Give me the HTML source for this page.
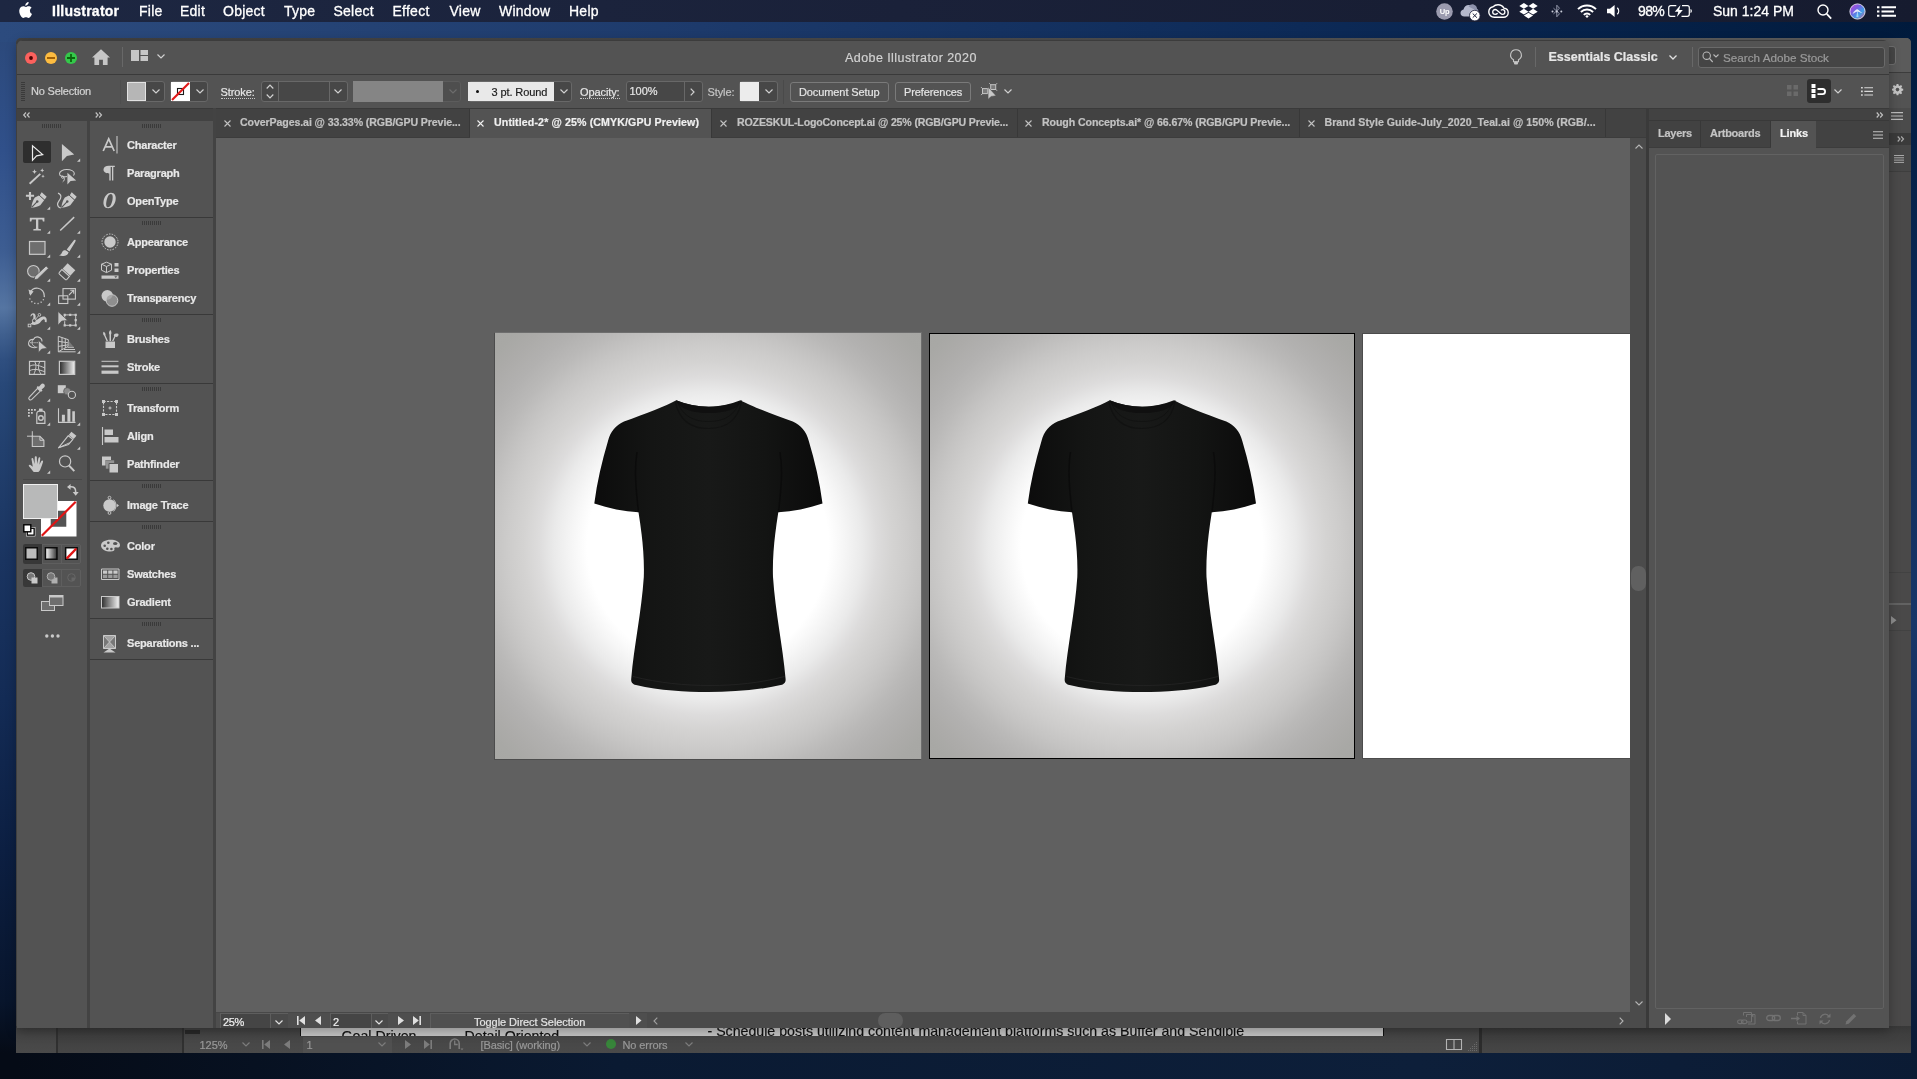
<!DOCTYPE html>
<html lang="en">
<head>
<meta charset="utf-8">
<title>Adobe Illustrator 2020</title>
<style>
*{box-sizing:border-box;margin:0;padding:0}
html,body{width:1917px;height:1079px;overflow:hidden;background:#06101f}
body{position:relative;font-family:"Liberation Sans",sans-serif;font-size:11px;color:#d6d6d6}
.a{position:absolute}
.t{position:absolute;white-space:nowrap;line-height:14px;-webkit-text-stroke:.2px}
svg{position:absolute;overflow:visible}
#desk{left:0;top:0;width:1917px;height:1079px;background:
 linear-gradient(90deg,rgba(0,0,0,0) 0px,rgba(0,0,0,0) 16px,#000 16px) ,
 linear-gradient(180deg,#2b4879 0px,#2b4879 22px,#30508a 150px,#3d5d92 250px,#5575a2 308px,#40608f 334px,#2f4f80 360px,#284878 385px,#22406e 450px,#1a3460 560px,#132b55 700px,#0c1f42 850px,#08152c 1000px,#050b16 1053px,#050b16 1079px);}
#desktop{left:0;top:22px;width:1917px;height:20px;background:linear-gradient(90deg,#2c4b7e 0,#1d3a6b 700px,#0d2a57 1300px,#001a3c 1917px)}
#deskright{left:1905px;top:22px;width:12px;height:1057px;background:linear-gradient(180deg,#001a3c 0,#0c2856 300px,#183668 600px,#12295a 800px,#0b1c3a 1000px,#0a1830 1057px)}
#deskbottom{left:16px;top:1050px;width:1901px;height:29px;background:linear-gradient(90deg,#050b16 0,#0a1a32 600px,#0d1f3a 1400px,#0b1b34 1917px)}
#menubar{will-change:transform;left:0;top:0;width:1917px;height:22px;background:linear-gradient(90deg,#1d2742 0,#1a2139 900px,#161b2f 1917px);color:#fff;font-size:14px}
#menubar .t{top:2px;line-height:18px;letter-spacing:.25px;-webkit-text-stroke:.3px #fff}
#back{will-change:transform;left:16px;top:38px;width:1895px;height:1015px;background:#4a4a4a;border-radius:5px 5px 0 0;overflow:hidden}
#win{will-change:transform;left:17px;top:39.600px;width:1872px;height:988.400px;background:#535353;border-radius:6px 6px 0 0;overflow:hidden;box-shadow:0 3px 12px rgba(0,0,0,.3)}
#wi,#bi{position:absolute;}
#wi{left:-17px;top:-39.600px}
#bi{left:-16px;top:-38px}
.dk{background:#424242}
.box{position:absolute;border:1px solid #686868;background:#474747;border-radius:3px}
.lbl{font-weight:bold;color:#e8e8e8;letter-spacing:-.2px}
.grip{position:absolute;width:19px;height:4px;background:repeating-linear-gradient(90deg,#3a3a3a 0,#3a3a3a 1px,rgba(0,0,0,0) 1px,rgba(0,0,0,0) 2px)}
</style>
</head>
<body>
<div id="desk" class="a"></div><div id="desktop" class="a"></div><div id="deskright" class="a"></div><div id="deskbottom" class="a"></div>
<div id="menubar" class="a">
<svg style="left:18px;top:2px" width="15" height="17" viewBox="0 0 15 17"><path fill="#fff" d="M10.6 0c.1 1-.3 1.900-.9 2.600-.6.700-1.500 1.200-2.400 1.100-.1-.9.300-1.900.900-2.500C8.800.5 9.800.05 10.600 0zM13.600 5.800c-.1.060-1.700 1-1.700 2.900 0 2.300 2 3.100 2.100 3.100-.01.050-.32 1.100-1.070 2.200-.65.950-1.330 1.900-2.400 1.900-1.050.02-1.400-.62-2.600-.62s-1.600.6-2.600.64c-1.030.04-1.800-1.030-2.500-1.970C1.500 12 .5 8.700 1.900 6.300c.7-1.200 1.950-1.950 3.300-1.970 1.030-.02 2 .7 2.600.7.630 0 1.800-.85 3.050-.73.520.02 1.980.21 2.750 1.500z"/></svg>
<span class="t" style="left:52px;font-weight:bold">Illustrator</span><span class="t" style="left:139px;">File</span><span class="t" style="left:180px;">Edit</span><span class="t" style="left:223px;">Object</span><span class="t" style="left:284px;">Type</span><span class="t" style="left:333.5px;">Select</span><span class="t" style="left:392.5px;">Effect</span><span class="t" style="left:449.5px;">View</span><span class="t" style="left:499px;">Window</span><span class="t" style="left:569px;">Help</span>
<span class="t" style="left:1638px;letter-spacing:-.6px">98%</span><span class="t" style="left:1713px;letter-spacing:0">Sun 1:24 PM</span>
<svg style="left:1435.500px;top:2.500px" width="17" height="17" viewBox="0 0 17 17"><circle cx="8.500" cy="8.500" r="8.300" fill="#9b9baf"/><text x="8.500" y="11" text-anchor="middle" font-family="Liberation Sans, sans-serif" font-weight="bold" font-size="7.500" letter-spacing="-.3" fill="#fff">Up</text></svg><svg style="left:1459.500px;top:3px" width="22" height="19" viewBox="0 0 22 19"><path d="M4.300 13.500C2 13.500.500 12 .500 10c0-1.700 1.200-3.200 3-3.500C4 4 6 2 8.800 2c2 0 3.700 1 4.600 2.600 2.300-.5 4.400 1.200 4.400 3.500 0 .3 0 .6-.1.900v4.500z" fill="#b4b8cc"/><path d="M8.500 3.500C10 1.500 12 1 13.600 1.500c2 .6 3.300 2.300 3.400 4.300 1 .5 1.500 1.500 1.300 2.700" fill="#8d92ab"/><circle cx="14.800" cy="12.600" r="5.300" fill="#fff" stroke="#1a2038" stroke-width=".8"/><path d="M12.700 10.500l4.200 4.200M16.900 10.500l-4.200 4.200" stroke="#1a2038" stroke-width="1"/></svg><svg style="left:1488px;top:4px" width="21" height="14" viewBox="0 0 21 14"><path d="M6.300 13.200C3.200 13.200.8 10.900.8 7.900c0-2.600 1.800-4.700 4.300-5.200C6.300 1.400 8.100.7 10 .7c2.600 0 4.800 1.400 5.900 3.400 2.500.3 4.300 2.300 4.300 4.600 0 2.500-2.100 4.500-4.700 4.500z" fill="none" stroke="#fff" stroke-width="1.400"/><path d="M7.200 10.300C5.800 10.300 4.700 9.200 4.700 7.900s1.100-2.400 2.500-2.400c.7 0 1.300.3 1.800.7l3.700 3.300c.5.500 1.100.8 1.900.8 1.300 0 2.300-1 2.300-2.300s-1-2.300-2.300-2.300c-.7 0-1.300.3-1.700.7M9.700 9.300c-.6.600-1.500 1-2.500 1" fill="none" stroke="#fff" stroke-width="1.300"/></svg><svg style="left:1519px;top:3px" width="19" height="16" viewBox="0 0 19 16"><path d="M4.900 0L.3 2.900l4.600 2.900 4.600-2.900zM14.100 0L9.500 2.900l4.600 2.900 4.600-2.900zM.3 8.700l4.600 2.900 4.600-2.900-4.600-2.900zM14.100 5.800L9.500 8.700l4.600 2.900 4.600-2.900zM4.900 12.600l4.600 2.900 4.600-2.900-4.600-2.900z" fill="#fff"/></svg><svg style="left:1551px;top:4px" width="12" height="15" viewBox="0 0 12 15"><path d="M2.500 4.200l6 5.500L5.800 12.800V1.200l2.700 3.100-6 5.500" fill="none" stroke="#9ea3b6" stroke-width=".9"/><circle cx="1.500" cy="7.500" r="1" fill="#c8ccd8"/><circle cx="5.800" cy="7.500" r="1" fill="#c8ccd8"/><circle cx="10.300" cy="7.500" r="1" fill="#c8ccd8"/></svg><svg style="left:1576.500px;top:3.500px" width="20" height="14" viewBox="0 0 20 14"><path d="M1 5.200a12.700 12.700 0 0 1 18 0M3.900 8a8.600 8.600 0 0 1 12.200 0M6.800 10.800a4.500 4.500 0 0 1 6.400 0" fill="none" stroke="#fff" stroke-width="1.900"/><path d="M8.300 12.200a2.400 2.400 0 0 1 3.400 0L10 14z" fill="#fff"/></svg><svg style="left:1606.500px;top:5px" width="15" height="12" viewBox="0 0 15 12"><path d="M0 3.800h3L7.600 0v12L3 8.200H0z" fill="#fff"/><path d="M10.300 2.700a4.700 4.700 0 0 1 0 6.600" fill="none" stroke="#fff" stroke-width="1.300"/></svg><svg style="left:1668px;top:5px" width="24" height="12" viewBox="0 0 24 12"><path d="M8.300.700H2.700a2 2 0 0 0-2 2v6.600a2 2 0 0 0 2 2h4.600M14 .700h5.300a2 2 0 0 1 2 2v6.600a2 2 0 0 1-2 2h-5.800" fill="none" stroke="#fff" stroke-width="1.200"/><path d="M22.500 4v4c.9-.3 1.300-1 1.300-2s-.4-1.700-1.300-2z" fill="#fff"/><path d="M12.500 0L6.800 6.800h3.500L8.800 12l6-7h-3.600z" fill="#fff"/></svg><svg style="left:1816.500px;top:3.500px" width="15" height="16" viewBox="0 0 15 16"><circle cx="6" cy="6" r="5" fill="none" stroke="#fff" stroke-width="1.400"/><path d="M9.700 9.800l4.500 4.800" stroke="#fff" stroke-width="1.700"/></svg><svg style="left:1848.500px;top:2.500px" width="17" height="17" viewBox="0 0 17 17"><defs><linearGradient id="siri" x1="0" y1="0" x2="1" y2="1"><stop offset="0" stop-color="#c84fd8"/><stop offset=".35" stop-color="#7c5ce0"/><stop offset=".65" stop-color="#3fa0e8"/><stop offset="1" stop-color="#e0508a"/></linearGradient></defs><circle cx="8.500" cy="8.500" r="7.600" fill="url(#siri)" stroke="#e8e8f4" stroke-width=".9"/><path d="M3.500 11c2-3.500 4-5 5.200-4.600 1.200.4 2.600 2.400 4.600 3.200-2.200.4-3.700-1-4.800-1-1.200 0-2.600 1.300-5 2.400z" fill="#fff" opacity=".85"/><path d="M8.500 6.200l1 8-2.200-.2z" fill="#dff" opacity=".6"/></svg><svg style="left:1876.500px;top:5.500px" width="19" height="11" viewBox="0 0 19 11"><path d="M0 1.200h2.400M0 5.500h2.400M0 9.800h2.400" stroke="#fff" stroke-width="1.900"/><path d="M4.500 1.200H19M4.500 5.500H17M4.500 9.800H19" stroke="#fff" stroke-width="1.900"/></svg></div>
<div id="back" class="a"><div id="bi">
<div class="a" style="left:16px;top:38px;width:1895px;height:6px;background:linear-gradient(90deg,#414141 0,#4a4a4b 900px,#5c5c5c 1700px)"></div><div class="a" style="left:1885px;top:38px;width:26px;height:34px;background:#5b5b5b"></div><div class="a" style="left:1880px;top:45.500px;width:15.500px;height:19.500px;background:#474747;border:1px solid #707070;border-radius:3px"></div><div class="a" style="left:1885px;top:72px;width:26px;height:1px;background:#3c3c3c"></div><div class="a" style="left:1885px;top:73px;width:26px;height:34.500px;background:#535353"></div><svg style="left:1891.500px;top:83.500px" width="11" height="11" viewBox="0 0 11 11"><path d="M4.600 0h1.800l.3 1.500 1 .4L9 1l1.200 1.300-.9 1.200.4 1 1.500.3v1.800l-1.500.3-.4 1 .9 1.200L9 10.300l-1.300-.9-1 .4-.3 1.500H4.600l-.3-1.500-1-.4-1.300.9L.8 9l.9-1.200-.4-1L0 6.500V4.700l1.300-.3.400-1L.8 2.200 2 1l1.300.9 1-.4z" fill="#c4c4c4"/><circle cx="5.500" cy="5.600" r="1.800" fill="#535353"/></svg><div class="a" style="left:1885px;top:107.500px;width:26px;height:25px;background:#4b4b4b"></div><svg style="left:1891px;top:111.500px" width="12" height="8" viewBox="0 0 12 8"><path d="M0 .600h12M0 4h12M0 7.400h12" stroke="#bdbdbd" stroke-width="1.100"/></svg><div class="a" style="left:1885px;top:132.500px;width:26px;height:12px;background:#3b3b3b"></div><svg style="left:1896.5px;top:135.5px" width="7" height="6" viewBox="0 0 7 6"><path d="M.700 .500L3 3 .700 5.500M4.200 .500L6.500 3 4.200 5.500" fill="none" stroke="#a8a8a8" stroke-width="1.200"/></svg><div class="a" style="left:1885px;top:144.500px;width:26px;height:27px;background:#474747;border-bottom:1px solid #3e3e3e"></div><svg style="left:1894px;top:154.500px" width="10" height="8" viewBox="0 0 10 8"><path d="M0 .500h10M0 2.800h10M0 5.100h10M0 7.400h10" stroke="#b4b4b4" stroke-width=".9"/></svg><div class="a" style="left:1885px;top:172px;width:26px;height:881px;background:#4a4949"></div><div class="a" style="left:1889px;top:572px;width:22px;height:1px;background:#424242"></div><div class="a" style="left:1889px;top:603px;width:22px;height:1.500px;background:#626262"></div><div class="a" style="left:1889px;top:630px;width:22px;height:1px;background:#424242"></div><svg style="left:1891px;top:615.500px" width="6" height="9" viewBox="0 0 6 9"><path d="M0 0v8.500l5.500-4.200z" fill="#8e8e8e"/></svg><div class="a" style="left:16px;top:1026px;width:1895px;height:27px;background:linear-gradient(180deg,#383838 0,#3e3e3e 8px,#464646 27px)"></div><div class="a" style="left:16px;top:1026px;width:40px;height:27px;background:linear-gradient(180deg,#3e3e3e 0,#454545 10px,#4a4a4a 27px)"></div><div class="a" style="left:55.500px;top:1026px;width:2px;height:27px;background:#303030"></div><div class="a" style="left:182px;top:1026px;width:2px;height:27px;background:#303030"></div><div class="a" style="left:184px;top:1026px;width:1295px;height:27px;background:linear-gradient(180deg,#404040 0,#464646 10px,#4a4a4a 27px)"></div><div class="a" style="left:184.500px;top:1029.500px;width:15px;height:4px;background:#282828"></div><div class="a" style="left:1479px;top:1026px;width:3px;height:27px;background:#2c2c2c"></div><div class="a" style="left:300px;top:1028px;width:1083.500px;height:8.300px;background:#c6c6c6;border-left:1px solid #111;border-right:1px solid #111;overflow:hidden;font-size:14.200px;color:#111"><span class="t" style="left:40.500px;top:.300px;line-height:16px">Goal Driven</span><span class="t" style="left:163.500px;top:.300px;line-height:16px">Detail Oriented</span><span class="t" style="left:406.500px;top:-4.600px;line-height:16px;font-size:14.200px;letter-spacing:-.012px">- Schedule posts utilizing content management platforms such as Buffer and Sendible</span></div><span class="t" style="left:199.500px;top:1037.500px;color:#989898">125%</span><svg style="left:241.5px;top:1042px" width="8" height="5" viewBox="0 0 8 5"><path d="M.5.500L4 4l3.500-3.500" fill="none" stroke="#7c7c7c" stroke-width="1.200"/></svg><svg style="left:261.5px;top:1039.5px" width="8" height="9" viewBox="0 0 8 9"><path d="M0 0h1.600v9H0zM8 0v9L2.200 4.500z" fill="#7c7c7c"/></svg><svg style="left:283.5px;top:1039.5px" width="8" height="9" viewBox="0 0 8 9"><path d="M6 0v9L0 4.500z" fill="#7c7c7c"/></svg><div class="a" style="left:302.500px;top:1036.500px;width:89px;height:16px;background:#505050"></div><span class="t" style="left:306.500px;top:1037.500px;color:#989898">1</span><svg style="left:378px;top:1042px" width="8" height="5" viewBox="0 0 8 5"><path d="M.5.500L4 4l3.500-3.500" fill="none" stroke="#7c7c7c" stroke-width="1.200"/></svg><svg style="left:405px;top:1039.5px" width="8" height="9" viewBox="0 0 8 9"><path d="M0 0v9l6-4.500z" fill="#7c7c7c"/></svg><svg style="left:424px;top:1039.5px" width="8" height="9" viewBox="0 0 8 9"><path d="M6.400 0H8v9H6.400zM0 0v9l5.800-4.500z" fill="#7c7c7c"/></svg><svg style="left:449px;top:1038px" width="15" height="13" viewBox="0 0 15 13"><path d="M1.200 11V5.500A4.500 4.500 0 0 1 10.200 5.500V11" fill="none" stroke="#7c7c7c" stroke-width="1.600"/><path d="M5.700 2.500v4h3" fill="none" stroke="#7c7c7c" stroke-width="1.300"/><path d="M11.500 10.500h3l-1.500 1.800z" fill="#7c7c7c"/></svg><span class="t" style="left:480.500px;top:1037.500px;color:#989898;letter-spacing:-.1px">[Basic] (working)</span><svg style="left:583px;top:1042px" width="8" height="5" viewBox="0 0 8 5"><path d="M.5.500L4 4l3.500-3.500" fill="none" stroke="#7c7c7c" stroke-width="1.200"/></svg><div class="a" style="left:606px;top:1039px;width:10px;height:10px;border-radius:50%;background:#37853a"></div><span class="t" style="left:622.500px;top:1037.500px;color:#989898;letter-spacing:-.1px">No errors</span><svg style="left:685px;top:1042px" width="8" height="5" viewBox="0 0 8 5"><path d="M.5.500L4 4l3.500-3.500" fill="none" stroke="#7c7c7c" stroke-width="1.200"/></svg><svg style="left:1446px;top:1039px" width="16" height="11" viewBox="0 0 16 11"><path d="M.5.500h15v10H.5zM8 .500v10" fill="none" stroke="#b4b4b4" stroke-width="1.100"/></svg><svg style="left:1468px;top:1041px" width="10" height="10" viewBox="0 0 10 10"><path d="M8.500 1v1M6.500 3v1M8.500 3v1M4.500 5v1M6.500 5v1M8.500 5v1M2.500 7v1M4.500 7v1M6.500 7v1M8.500 7v1M.5 9v1M2.500 9v1M4.500 9v1M6.500 9v1M8.500 9v1" stroke="#6a6a6a" stroke-width="1"/></svg></div></div>
<div id="win" class="a"><div id="wi">
<div class="a" style="left:17px;top:39.600px;width:1872px;height:1px;background:#3c3c3c"></div><div class="a" style="left:17px;top:74px;width:1872px;height:1px;background:#3a3a3a"></div><svg style="left:24px;top:51px" width="56" height="14" viewBox="0 0 56 14"><circle cx="7" cy="7" r="6" fill="#fc615d"/><circle cx="7" cy="7" r="1.9" fill="#4d0000"/><circle cx="27" cy="7" r="6" fill="#fdbc40"/><rect x="23" y="6.1" width="8" height="1.8" fill="#985700"/><circle cx="47" cy="7" r="6" fill="#34c84a"/><path d="M43 7h8M47 3v8" stroke="#0b650d" stroke-width="1.8"/></svg><svg style="left:92px;top:49px" width="18" height="16" viewBox="0 0 18 16"><path fill="#c6c6c6" d="M9 .3L0 8.600h2.400V16h4.700v-5.300h3.800V16h4.700V8.600H18z"/></svg><div class="a" style="left:122px;top:47px;width:1px;height:20px;background:#686868"></div><svg style="left:131px;top:50px" width="17" height="11" viewBox="0 0 17 11"><path fill="#c6c6c6" d="M0 0h8v11H0zM9.500 0H17v5H9.500zM9.500 6H17v5H9.500z"/></svg><svg style="left:157px;top:54px" width="8" height="5" viewBox="0 0 8 5"><path d="M.5.500L4 4l3.500-3.500" fill="none" stroke="#d0d0d0" stroke-width="1.200"/></svg><span class="t" style="left:845px;top:51px;font-size:12.5px;letter-spacing:.43px;color:#d2d2d2">Adobe Illustrator 2020</span><svg style="left:1510px;top:49px" width="12" height="16" viewBox="0 0 12 16"><path d="M6 .7a5.300 5.300 0 0 0-2.500 10v2h5v-2A5.300 5.300 0 0 0 6 .7z" fill="none" stroke="#c6c6c6" stroke-width="1.100"/><rect x="4" y="12.500" width="4" height="3" rx="1" fill="#c6c6c6"/></svg><div class="a" style="left:1535px;top:47px;width:1px;height:20px;background:#686868"></div><span class="t" style="left:1548.500px;top:50px;font-size:12.5px;font-weight:bold;color:#e6e6e6">Essentials Classic</span><svg style="left:1669px;top:55px" width="8" height="5" viewBox="0 0 8 5"><path d="M.5.500L4 4l3.500-3.500" fill="none" stroke="#e0e0e0" stroke-width="1.300"/></svg><div class="a" style="left:1692px;top:47px;width:1px;height:20px;background:#686868"></div><div class="box" style="left:1698px;top:47px;width:187px;height:21px;background:#454545;border-color:#6a6a6a"></div><svg style="left:1702px;top:51px" width="18" height="13" viewBox="0 0 18 13"><circle cx="4.700" cy="4.700" r="3.700" fill="none" stroke="#b8b8b8" stroke-width="1.100"/><path d="M7.400 7.400l3.300 3.600" stroke="#b8b8b8" stroke-width="1.200"/><path d="M11.500 3.500l2.500 2.500 2.500-2.500" fill="none" stroke="#b8b8b8" stroke-width="1.100"/></svg><span class="t" style="left:1723px;top:51px;font-size:11.7px;color:#9a9a9a">Search Adobe Stock</span><div class="a" style="left:20.500px;top:82px;width:4px;height:19px;background:repeating-linear-gradient(180deg,#3a3a3a 0,#3a3a3a 1px,rgba(0,0,0,0) 1px,rgba(0,0,0,0) 2px)"></div><span class="t" style="left:31px;top:84px;letter-spacing:-.2px;color:#d4d4d4">No Selection</span><div class="a" style="left:120px;top:80px;width:1px;height:24px;background:#4e4e4e"></div><div class="box" style="left:127px;top:81px;width:38px;height:21px"></div><div class="a" style="left:127px;top:82px;width:19px;height:19px;background:#b6b6b6;border:1px solid #e2e2e2"></div><svg style="left:152px;top:89px" width="8" height="5" viewBox="0 0 8 5"><path d="M.5.500L4 4l3.500-3.500" fill="none" stroke="#d0d0d0" stroke-width="1.200"/></svg><div class="box" style="left:170px;top:81px;width:38px;height:21px"></div><svg style="left:171px;top:82px" width="19" height="19" viewBox="0 0 19 19"><rect width="19" height="19" fill="#fff"/><rect x="6.500" y="6.500" width="6" height="6" fill="none" stroke="#1a1a1a" stroke-width="1.100"/><path d="M1 18L18 1" stroke="#e01818" stroke-width="2.100"/></svg><svg style="left:195.5px;top:89px" width="8" height="5" viewBox="0 0 8 5"><path d="M.5.500L4 4l3.500-3.500" fill="none" stroke="#d0d0d0" stroke-width="1.200"/></svg><span class="t" style="left:220.500px;top:86px;letter-spacing:-.1px;color:#e6e6e6;border-bottom:1px dotted #c8c8c8;line-height:12px;padding-bottom:0">Stroke:</span><div class="box" style="left:260.500px;top:81px;width:87px;height:21px"></div><div class="a" style="left:278px;top:82px;width:1px;height:19px;background:#686868"></div><div class="a" style="left:329px;top:82px;width:1px;height:19px;background:#686868"></div><svg style="left:265.500px;top:84px" width="8" height="15" viewBox="0 0 8 15"><path d="M.7 4.500L4 1.200l3.300 3.300M.7 10.500L4 13.800l3.300-3.300" fill="none" stroke="#d0d0d0" stroke-width="1.200"/></svg><svg style="left:334px;top:89px" width="8" height="5" viewBox="0 0 8 5"><path d="M.5.500L4 4l3.500-3.500" fill="none" stroke="#d0d0d0" stroke-width="1.200"/></svg><div class="box" style="left:353px;top:81px;width:108px;height:21px;border-color:#5c5c5c;background:#4e4e4e"></div><div class="a" style="left:353px;top:81px;width:90px;height:21px;background:#858585"></div><svg style="left:448.5px;top:89px" width="8" height="5" viewBox="0 0 8 5"><path d="M.5.500L4 4l3.500-3.500" fill="none" stroke="#6c6c6c" stroke-width="1.200"/></svg><div class="box" style="left:467.500px;top:81px;width:104.500px;height:21px"></div><div class="a" style="left:467.500px;top:82px;width:86.500px;height:19px;background:#e9e9e9"></div><div class="a" style="left:475.500px;top:90px;width:3px;height:3px;border-radius:50%;background:#111"></div><span class="t" style="left:491.500px;top:84.500px;color:#1c1c1c;letter-spacing:-.1px">3 pt. Round</span><svg style="left:559.5px;top:89px" width="8" height="5" viewBox="0 0 8 5"><path d="M.5.500L4 4l3.500-3.500" fill="none" stroke="#d0d0d0" stroke-width="1.200"/></svg><span class="t" style="left:580px;top:86px;letter-spacing:-.1px;color:#e6e6e6;border-bottom:1px dotted #c8c8c8;line-height:12px;padding-bottom:0">Opacity:</span><div class="box" style="left:625.500px;top:81px;width:77px;height:21px"></div><div class="a" style="left:683.500px;top:82px;width:1px;height:19px;background:#686868"></div><span class="t" style="left:629.500px;top:84px;color:#e6e6e6">100%</span><svg style="left:690px;top:87.500px" width="5" height="8" viewBox="0 0 5 8"><path d="M.7.700L4 4 .7 7.300" fill="none" stroke="#d0d0d0" stroke-width="1.200"/></svg><span class="t" style="left:707.500px;top:84.500px;letter-spacing:-.1px;color:#c4c4c4">Style:</span><div class="box" style="left:739px;top:81px;width:38.500px;height:21px"></div><div class="a" style="left:739.500px;top:82px;width:19.500px;height:19px;background:#ececec"></div><svg style="left:764.5px;top:89px" width="8" height="5" viewBox="0 0 8 5"><path d="M.5.500L4 4l3.500-3.500" fill="none" stroke="#d0d0d0" stroke-width="1.200"/></svg><div class="a" style="left:783px;top:80px;width:1px;height:24px;background:#4a4a4a"></div><div class="box" style="left:790px;top:81.500px;width:99px;height:20px;background:#535353;border-color:#7a7a7a"></div><span class="t" style="left:799px;top:84.500px;color:#e4e4e4;letter-spacing:-.1px">Document Setup</span><div class="box" style="left:895px;top:81.500px;width:75.500px;height:20px;background:#535353;border-color:#7a7a7a"></div><span class="t" style="left:904px;top:84.500px;color:#e4e4e4;letter-spacing:-.1px">Preferences</span><svg style="left:980px;top:82px" width="18" height="18" viewBox="0 0 18 18"><path d="M1 5.100l1.500 1.500M1 13.100l1.500-1.500M9.200 1.200l1.500 1.500M17.100 1.200l-1.500 1.500M17.100 8.800l-1.500-1.500" stroke="#c4c4c4" stroke-width=".9"/><rect x="2.500" y="6.600" width="5" height="5" fill="#7a7a7a" stroke="#c4c4c4" stroke-width="1"/><rect x="10.700" y="2.700" width="5" height="4.800" fill="#7a7a7a" stroke="#c4c4c4" stroke-width="1"/><path d="M8.100 5v12.300l2.900-2.900 5-.7z" fill="#c8c8c8" stroke="#535353" stroke-width=".5"/></svg><svg style="left:1003.5px;top:88.8px" width="8" height="5" viewBox="0 0 8 5"><path d="M.5.500L4 4l3.500-3.500" fill="none" stroke="#d0d0d0" stroke-width="1.200"/></svg><svg style="left:1787px;top:85px" width="11" height="11" viewBox="0 0 11 11"><path fill="#6a6a6a" d="M0 0h4.500v4.500H0zM6.500 0H11v4.500H6.500zM0 6.500h4.500V11H0zM6.500 6.500H11V11H6.500z"/></svg><div class="a" style="left:1807px;top:79px;width:24px;height:24px;border-radius:3px;background:#2e2e2e"></div><svg style="left:1811px;top:83.500px" width="16" height="15" viewBox="0 0 16 15"><path fill="#fff" d="M.5 0h4v4h-4zM.5 5h4v4h-4zM.5 10h4v4h-4z"/><path d="M6.500 5h5a2.600 2.600 0 0 1 0 5.200h-5" fill="none" stroke="#fff" stroke-width="1.800"/></svg><svg style="left:1833.5px;top:88.5px" width="8" height="5" viewBox="0 0 8 5"><path d="M.5.500L4 4l3.500-3.500" fill="none" stroke="#d0d0d0" stroke-width="1.200"/></svg><svg style="left:1860.500px;top:87px" width="12" height="9" viewBox="0 0 12 9"><path d="M0 .800h1.800M0 4.400h1.800M0 8h1.800" stroke="#d8d8d8" stroke-width="1.600"/><path d="M3.300 .800H12M3.300 4.400H12M3.300 8H12" stroke="#d8d8d8" stroke-width="1.100"/></svg><div class="a dk" style="left:17px;top:108px;width:1872px;height:13px"></div><div class="a" style="left:17px;top:108px;width:1872px;height:1px;background:#3a3a3a"></div><div class="a" style="left:87px;top:121px;width:3px;height:907px;background:#434343"></div><div class="a" style="left:213px;top:108px;width:3px;height:920px;background:#434343"></div><div class="a" style="left:1646px;top:108px;width:3px;height:920px;background:#3a3a3a"></div><svg style="left:22.5px;top:112px" width="7" height="6" viewBox="0 0 7 6"><path d="M3 .500L.700 3 3 5.500M6.500 .500L4.200 3 6.500 5.500" fill="none" stroke="#c0c0c0" stroke-width="1.200"/></svg><svg style="left:94.5px;top:112px" width="7" height="6" viewBox="0 0 7 6"><path d="M.700 .500L3 3 .700 5.500M4.200 .500L6.500 3 4.200 5.500" fill="none" stroke="#c0c0c0" stroke-width="1.200"/></svg><svg style="left:1875.5px;top:112px" width="7" height="6" viewBox="0 0 7 6"><path d="M.700 .500L3 3 .700 5.500M4.200 .500L6.500 3 4.200 5.500" fill="none" stroke="#c0c0c0" stroke-width="1.200"/></svg><div class="a dk" style="left:216px;top:109px;width:1430px;height:28.500px"></div><div class="a" style="left:216px;top:137px;width:1430px;height:1px;background:#3c3c3c"></div><div class="a" style="left:216px;top:109px;width:253.5px;height:28px;background:#424242;border-right:1px solid #383838"></div><svg style="left:223.5px;top:119.500px" width="7" height="7" viewBox="0 0 7 7"><path d="M.500 .500l6 6M6.500 .500l-6 6" stroke="#c2c2c2" stroke-width="1.100"/></svg><span class="t" style="left:240px;top:115px;font-weight:bold;font-size:10.6px;letter-spacing:-0.1px;color:#c2c2c2">CoverPages.ai @ 33.33% (RGB/GPU Previe...</span><div class="a" style="left:469.5px;top:109px;width:242.0px;height:29px;background:#535353;border-right:1px solid #383838"></div><svg style="left:477px;top:119.500px" width="7" height="7" viewBox="0 0 7 7"><path d="M.500 .500l6 6M6.500 .500l-6 6" stroke="#f0f0f0" stroke-width="1.100"/></svg><span class="t" style="left:494px;top:115px;font-weight:bold;font-size:10.6px;letter-spacing:0.13px;color:#f0f0f0">Untitled-2* @ 25% (CMYK/GPU Preview)</span><div class="a" style="left:711.5px;top:109px;width:306.0px;height:28px;background:#424242;border-right:1px solid #383838"></div><svg style="left:720px;top:119.500px" width="7" height="7" viewBox="0 0 7 7"><path d="M.500 .500l6 6M6.500 .500l-6 6" stroke="#c2c2c2" stroke-width="1.100"/></svg><span class="t" style="left:737px;top:115px;font-weight:bold;font-size:10.6px;letter-spacing:-0.16px;color:#c2c2c2">ROZESKUL-LogoConcept.ai @ 25% (RGB/GPU Previe...</span><div class="a" style="left:1017.5px;top:109px;width:282.5px;height:28px;background:#424242;border-right:1px solid #383838"></div><svg style="left:1025px;top:119.500px" width="7" height="7" viewBox="0 0 7 7"><path d="M.500 .500l6 6M6.500 .500l-6 6" stroke="#c2c2c2" stroke-width="1.100"/></svg><span class="t" style="left:1042px;top:115px;font-weight:bold;font-size:10.6px;letter-spacing:-0.09px;color:#c2c2c2">Rough Concepts.ai* @ 66.67% (RGB/GPU Previe...</span><div class="a" style="left:1300px;top:109px;width:305.5px;height:28px;background:#424242;border-right:1px solid #383838"></div><svg style="left:1308px;top:119.500px" width="7" height="7" viewBox="0 0 7 7"><path d="M.500 .500l6 6M6.500 .500l-6 6" stroke="#c2c2c2" stroke-width="1.100"/></svg><span class="t" style="left:1324.5px;top:115px;font-weight:bold;font-size:10.6px;letter-spacing:0.04px;color:#c2c2c2">Brand Style Guide-July_2020_Teal.ai @ 150% (RGB/...</span><div class="grip" style="left:42px;top:124px"></div><div class="a" style="left:23px;top:141px;width:28px;height:22px;border-radius:2px;background:#2e2e2e"></div><svg style="left:0;top:0" width="0" height="0"><defs><linearGradient id="tg" x1="0" x2="1" y1="0" y2="0"><stop offset="0" stop-color="#2a2a2a"/><stop offset="1" stop-color="#f2f2f2"/></linearGradient></defs></svg>
<svg style="left:25px;top:140px" width="24" height="24" viewBox="0 0 24 24"><path d="M7.500 5.700V20.300l4.100-4.400 6.100-1.300z" fill="none" stroke="#ececec" stroke-width="1.200" stroke-linejoin="miter"/></svg>
<svg style="left:55px;top:140px" width="24" height="24" viewBox="0 0 24 24"><path d="M6.900 4v17.200l5-5.300 7.300-1.400z" fill="#c9c9c9"/><path d="M25.200 18.600v3.200H22z" fill="#c9c9c9"/></svg>
<svg style="left:25px;top:164px" width="24" height="24" viewBox="0 0 24 24"><path d="M4.600 19.800L15.300 9.900" stroke="#c9c9c9" stroke-width="1.900"/><path d="M9.500 5.300l.7 1.700 1.700.7-1.700.7-.7 1.700-.7-1.700-1.700-.7 1.700-.7zM17.200 4.300l.6 1.500 1.500.6-1.500.6-.6 1.500-.6-1.500-1.500-.6 1.500-.6zM18 10.600l.5 1.200 1.200.5-1.200.5-.5 1.200-.5-1.200-1.200-.5 1.200-.5z" fill="#c9c9c9"/></svg>
<svg style="left:55px;top:164px" width="24" height="24" viewBox="0 0 24 24"><path d="M12 12.500c-4 .8-7.500-.3-7.500-2.800 0-2.400 3.300-4.200 7.400-4.200 4 0 7.400 1.700 7.400 4 0 .8-.3 1.500-.9 2" fill="none" stroke="#c9c9c9" stroke-width="1.100"/><path d="M6.500 12.300c1.500-.8 3 .2 2.300 1.500-.6 1-2.300.6-2.200-.6.100-1 1.800-.6 2.500.4.800 1.200.2 3.300-1.400 4.200" fill="none" stroke="#c9c9c9" stroke-width="1"/><path d="M12.400 8.800v11.800l3.200-3.500 5.600-.6z" fill="#c9c9c9"/></svg>
<svg style="left:25px;top:188px" width="24" height="24" viewBox="0 0 24 24"><path d="M.900 7.800h8.200M5 4v7.900" stroke="#c9c9c9" stroke-width="2.100"/><path d="M6.400 19.700C6.800 15.500 8 12 9.900 9.600L14.400 7.200 19.500 11.800 15.300 17.300C12.500 18.800 9.500 19.600 6.400 19.700z" fill="#c9c9c9"/><path d="M6.900 19.200L11.900 13.900" stroke="#535353" stroke-width="1.100"/><circle cx="12.300" cy="13.500" r="1.200" fill="#535353"/><path d="M14.600 7.400L16.700 4.300 21.700 8.800 19.300 11.900z" fill="#c9c9c9"/><path d="M13.900 6.900L20 12.400" stroke="#535353" stroke-width="1"/><path d="M25.200 18.600v3.200H22z" fill="#c9c9c9"/></svg>
<svg style="left:55px;top:188px" width="24" height="24" viewBox="0 0 24 24"><path d="M3 5.100c2.600 1 3.400 2.600 2.600 5-.8 2.400-3.400 4-3 6.600.2 1.600 1.400 2.800 3.200 3.300" fill="none" stroke="#c9c9c9" stroke-width="1.200"/><path d="M6.400 19.700C6.800 15.500 8 12 9.900 9.600L14.400 7.200 19.500 11.800 15.300 17.300C12.500 18.800 9.500 19.600 6.400 19.700z" fill="#c9c9c9"/><path d="M6.900 19.200L11.900 13.900" stroke="#535353" stroke-width="1.100"/><circle cx="12.300" cy="13.500" r="1.200" fill="#535353"/><path d="M14.600 7.400L16.700 4.300 21.700 8.800 19.300 11.900z" fill="#c9c9c9"/><path d="M13.900 6.900L20 12.400" stroke="#535353" stroke-width="1"/></svg>
<svg style="left:25px;top:212px" width="24" height="24" viewBox="0 0 24 24"><path d="M4.800 5.700h14.600v3.800h-1.500l-.6-1.900H13.300v9.200l2.700.5v1.300H8.300v-1.300l2.700-.5V7.600H6.900l-.6 1.900H4.800z" fill="#c9c9c9"/><path d="M25.200 18.600v3.200H22z" fill="#c9c9c9"/></svg>
<svg style="left:55px;top:212px" width="24" height="24" viewBox="0 0 24 24"><path d="M5.200 18.500L19.200 5.100" stroke="#c9c9c9" stroke-width="1.500"/><path d="M25.200 18.600v3.200H22z" fill="#c9c9c9"/></svg>
<svg style="left:25px;top:236px" width="24" height="24" viewBox="0 0 24 24"><rect x="4.500" y="5.500" width="15.500" height="12.800" fill="#6e6e6e" stroke="#c9c9c9" stroke-width="1.200"/><path d="M25.200 18.600v3.200H22z" fill="#c9c9c9"/></svg>
<svg style="left:55px;top:236px" width="24" height="24" viewBox="0 0 24 24"><path d="M19.800 3.800c1.200-.3 1 .9.400 2.100l-5.800 9.500-2.700-1.800 7-9.100c.3-.4.700-.6 1.100-.7z" fill="#c9c9c9"/><path d="M10.900 14.500l2.700 1.800c-.5 2.500-2.800 3.700-5.200 3.700-1.700 0-3.300-.3-4.400-.7 2.200-.6 2.500-1.900 3.200-3.400.7-1.400 2.200-2 3.700-1.400z" fill="#c9c9c9"/><path d="M25.200 18.600v3.200H22z" fill="#c9c9c9"/></svg>
<svg style="left:25px;top:260px" width="24" height="24" viewBox="0 0 24 24"><circle cx="8.400" cy="11.300" r="5.800" fill="#6e6e6e" stroke="#c9c9c9" stroke-width="1.100"/><path d="M9.200 19.900l.7-3.500L21.200 5.900l2.300 2.400L12.600 19z" fill="#c9c9c9" stroke="#535353" stroke-width=".8"/><path d="M25.200 18.600v3.200H22z" fill="#c9c9c9"/></svg>
<svg style="left:55px;top:260px" width="24" height="24" viewBox="0 0 24 24"><path d="M12.600 3.200l7.700 7-5 5.500-7.700-7z" fill="#c9c9c9"/><path d="M6.900 9.500l7.600 6.900-2.600 2.900c-.5.500-1.200.6-1.700.1l-5.800-5.300c-.5-.5-.5-1.200 0-1.700z" fill="none" stroke="#c9c9c9" stroke-width="1.100"/><path d="M25.200 18.600v3.200H22z" fill="#c9c9c9"/></svg>
<svg style="left:25px;top:284px" width="24" height="24" viewBox="0 0 24 24"><path d="M4.600 9.600A7.500 7.500 0 0 1 19.300 12" fill="none" stroke="#c9c9c9" stroke-width="1.200"/><path d="M3.400 5.500l5.200 2-3.400 4.200z" fill="#c9c9c9"/><path d="M19.300 12a7.500 7.500 0 0 1-14.900 1.300" fill="none" stroke="#c9c9c9" stroke-width="1.300" stroke-dasharray="1.200 2.100"/><path d="M25.200 18.600v3.200H22z" fill="#c9c9c9"/></svg>
<svg style="left:55px;top:284px" width="24" height="24" viewBox="0 0 24 24"><rect x="3.600" y="11.800" width="9.200" height="7.700" fill="none" stroke="#c9c9c9" stroke-width="1.100"/><rect x="8" y="4.600" width="12.400" height="10.500" fill="none" stroke="#c9c9c9" stroke-width="1.100"/><path d="M14 11l4.300-4.300M15.300 6.300h3.400v3.400" fill="none" stroke="#c9c9c9" stroke-width="1.100"/><path d="M25.200 18.600v3.200H22z" fill="#c9c9c9"/></svg>
<svg style="left:25px;top:308px" width="24" height="24" viewBox="0 0 24 24"><path d="M5.400 8.400C5.600 5.400 8.800 4.400 10.200 6.400c1.300 1.900-.4 4.200.600 5.500 1.600.5 3.800-2.500 6.800-3.300 3-.8 4.800 1.700 4 5.600l-1.800-.2c.4-2-.4-3-1.600-2.600-1.800.6-2.400 3.300-5.200 4.700-2.500 1.300-5.300.8-6.800.1l2.600-3.800c-1-1.700.1-4-.7-5.300-.6-.8-1.300-.3-1.500 1z" fill="#c9c9c9"/><circle cx="9.300" cy="12.700" r="1.900" fill="#535353" stroke="#c9c9c9" stroke-width="1"/><circle cx="14.400" cy="6.800" r="1.300" fill="#535353" stroke="#c9c9c9" stroke-width=".9"/><rect x="3.200" y="16.200" width="2.600" height="2.600" fill="#535353" stroke="#c9c9c9" stroke-width=".9"/><path d="M5.800 16.200l2.200-2.200M10.500 11.300l3-3.500" stroke="#c9c9c9" stroke-width=".9"/><path d="M25.200 18.600v3.200H22z" fill="#c9c9c9"/></svg>
<svg style="left:55px;top:308px" width="24" height="24" viewBox="0 0 24 24"><rect x="9.700" y="6.900" width="11" height="10.400" fill="none" stroke="#c9c9c9" stroke-width="1"/><path d="M8.600 5.800h2.200v2.200H8.600zM14.100 5.800h2.200v2.200h-2.200zM19.600 5.800h2.200v2.200h-2.200zM19.600 11h2.200v2.200h-2.200zM19.600 16.200h2.200v2.200h-2.200zM14.100 16.200h2.200v2.200h-2.200zM8.600 16.200h2.200v2.200H8.600z" fill="#c9c9c9"/><path d="M3 3.400v13.800l3.700-4.100 6-.7z" fill="#c9c9c9" stroke="#535353" stroke-width=".7"/><path d="M25.200 18.600v3.200H22z" fill="#c9c9c9"/></svg>
<svg style="left:25px;top:332px" width="24" height="24" viewBox="0 0 24 24"><path d="M12.400 14.900c-1.700 1-3.900 1-5.600.4-2.400-.9-3.700-3-3-5.100.6-1.900 2.600-2.900 4.600-2.800.9-1.800 3-2.800 5.100-2.300 2.100.5 3.500 2.300 3.500 4.300" fill="none" stroke="#c9c9c9" stroke-width="1.100"/><path d="M8.600 7.500c-1.300 1-1.900 2.500-1.500 4 .4 1.600 1.700 2.800 3.400 3.200" fill="none" stroke="#c9c9c9" stroke-width="1"/><path d="M5.300 10.600h7.400" stroke="#c9c9c9" stroke-width="1.100" stroke-dasharray="1 1.100"/><path d="M13.500 8.600v11.800l3.200-3.400 5.500-.7z" fill="#c9c9c9" stroke="#535353" stroke-width=".6"/><path d="M25.200 18.600v3.200H22z" fill="#c9c9c9"/></svg>
<svg style="left:55px;top:332px" width="24" height="24" viewBox="0 0 24 24"><path d="M3.300 4.300v15.400M3.300 4.300l10 3.400M3.300 19.700l10-5.400M3.300 9.300l9.800 1.500M3.300 14.400l10-1.600M7 5.600v12.200M10.300 6.700v9.400M13.300 7.700v6.600" fill="none" stroke="#c9c9c9" stroke-width="1"/><path d="M3.300 19.800h17.300M9 17.500h11M12.600 15.400h6.300" stroke="#c9c9c9" stroke-width="1"/><path d="M13.600 8.800l5.300 6.500h-5.300z" fill="#7a7a7a"/><path d="M25.200 18.600v3.200H22z" fill="#c9c9c9"/></svg>
<svg style="left:25px;top:356px" width="24" height="24" viewBox="0 0 24 24"><rect x="4.500" y="5.400" width="15.300" height="13" fill="none" stroke="#c9c9c9" stroke-width="1.200"/><path d="M4.500 10.300c4.500-2.600 9-1 15.300 1.600M4.500 14.700c5-2.600 10-.7 15.300 1M9.600 5.400c2.600 4.300 1 8.600-.8 13M15 5.400c-2.600 4-1.700 9 1.200 13" fill="none" stroke="#c9c9c9" stroke-width="1"/></svg>
<svg style="left:55px;top:356px" width="24" height="24" viewBox="0 0 24 24"><rect x="4.400" y="5.300" width="15.300" height="13.100" fill="url(#tg)" stroke="#c9c9c9" stroke-width="1.200"/></svg>
<svg style="left:25px;top:380px" width="24" height="24" viewBox="0 0 24 24"><path d="M4.200 19.300c-.7-.7-.4-1.700.1-2.300l8.300-8.600 2.700 2.700-8.500 8.300c-.7.600-1.900.6-2.600-.1z" fill="none" stroke="#c9c9c9" stroke-width="1.100"/><path d="M11.600 7.200l1.300-1.300 1 .9 2-2.400c.9-1 2.400-1.100 3.300-.2.900.9.800 2.400-.2 3.300l-2.400 2 .9 1-1.300 1.300z" fill="#c9c9c9"/><path d="M25.200 18.600v3.200H22z" fill="#c9c9c9"/></svg>
<svg style="left:55px;top:380px" width="24" height="24" viewBox="0 0 24 24"><rect x="2.800" y="5.200" width="8" height="8" fill="#c9c9c9"/><circle cx="12.200" cy="11.300" r="3.600" fill="#8a8a8a" stroke="#535353" stroke-width=".7"/><circle cx="16.900" cy="14.900" r="3.600" fill="#535353" stroke="#c9c9c9" stroke-width="1.100"/></svg>
<svg style="left:25px;top:404px" width="24" height="24" viewBox="0 0 24 24"><path d="M3 5h1.800v1.800H3zM6 5h1.800v1.800H6zM9 5h1.800v1.800H9zM3 8h1.800v1.800H3zM6 8h1.800v1.800H6zM3 11h1.800v1.800H3z" fill="#c9c9c9"/><path d="M14 4.600h3.600v2.600H14z" fill="#c9c9c9"/><path d="M11.800 9.600c0-1.300 1-2.400 2.300-2.400h3.500c1.300 0 2.300 1.100 2.300 2.400v9.700h-8.100z" fill="none" stroke="#c9c9c9" stroke-width="1.200"/><circle cx="15.900" cy="14" r="2.300" fill="none" stroke="#c9c9c9" stroke-width="1.400"/><path d="M25.200 18.600v3.200H22z" fill="#c9c9c9"/></svg>
<svg style="left:55px;top:404px" width="24" height="24" viewBox="0 0 24 24"><path d="M3.500 4.300v14.100h17" fill="none" stroke="#c9c9c9" stroke-width="1.100"/><path d="M6.900 10.800h3v7h-3zM12.400 4.900h3v12.900h-3zM17.300 7.300h2.600v10.500h-2.600z" fill="#c9c9c9"/><path d="M25.200 18.600v3.200H22z" fill="#c9c9c9"/></svg>
<svg style="left:25px;top:428px" width="24" height="24" viewBox="0 0 24 24"><path d="M2 8.200h6.200M7.300 3.200v6" stroke="#c9c9c9" stroke-width="1" fill="none"/><path d="M7.300 8.300h7.600l4 4v6.200H7.300z" fill="#6e6e6e" stroke="#c9c9c9" stroke-width="1.100"/><path d="M14.900 8.300v4h4" fill="none" stroke="#c9c9c9" stroke-width="1"/></svg>
<svg style="left:55px;top:428px" width="24" height="24" viewBox="0 0 24 24"><path d="M3.500 19.800L13.300 7.700l4.600 3.700-4.300 5z" fill="none" stroke="#c9c9c9" stroke-width="1.100" stroke-linejoin="round"/><path d="M13.800 7l2.600-3.200 5 4-2.700 3.300z" fill="#c9c9c9"/><path d="M3.500 19.800l11-5" stroke="#c9c9c9" stroke-width="1"/><path d="M25.200 18.600v3.200H22z" fill="#c9c9c9"/></svg>
<svg style="left:25px;top:452px" width="24" height="24" viewBox="0 0 24 24"><path d="M8.700 20c-1.300-1.500-3-4-4.700-5.800-.7-.8.300-2 1.500-1.200l2.300 1.800-1.300-7.600c-.2-1.300 1.500-1.600 1.800-.4l1.200 5.300.3-7c0-1.300 1.900-1.300 2 0l.3 6.900 1.400-6c.3-1.200 2-.9 1.800.4l-.9 6.400 1.900-3.700c.6-1.100 2.100-.4 1.700.8-.9 2.500-1.500 5-2.600 7.300-.6 1.400-1.400 2.300-2 2.800z" fill="#c9c9c9"/><path d="M25.200 18.600v3.200H22z" fill="#c9c9c9"/></svg>
<svg style="left:55px;top:452px" width="24" height="24" viewBox="0 0 24 24"><circle cx="10.100" cy="9.400" r="5.600" fill="none" stroke="#c9c9c9" stroke-width="1.200"/><path d="M14 13.500l5.300 5.600" stroke="#c9c9c9" stroke-width="1.900"/></svg><div class="a" style="left:23px;top:478.500px;width:59px;height:1px;background:#484848"></div><svg style="left:40.500px;top:501px" width="35.500" height="35.500" viewBox="0 0 35.500 35.500"><path fill="#fff" fill-rule="evenodd" d="M0 0h35.500v35.500H0zM9.700 9.700v16.100h15.600V9.700z"/><path d="M.8 34.700L34.700.8" stroke="#e01414" stroke-width="2.200"/></svg><div class="a" style="left:22.500px;top:483.500px;width:35px;height:35px;background:#b8b9b9;border:1px solid #f0f0f0"></div><svg style="left:66.500px;top:484px" width="12" height="12" viewBox="0 0 12 12"><path d="M3 2.800c4-.4 6 1.600 5.700 5.400" fill="none" stroke="#c9c9c9" stroke-width="1.600"/><path d="M0 2.900L3.600 0v5.800zM8.700 11.800L5.700 8h6z" fill="#c9c9c9"/></svg><svg style="left:22.500px;top:524px" width="12" height="12" viewBox="0 0 12 12"><rect x="4.200" y="4.200" width="7" height="7" fill="#fff" stroke="#000" stroke-width="1.400"/><rect x="3.300" y="3.300" width="8.800" height="8.800" fill="none" stroke="#fff" stroke-width=".5"/><rect x=".8" y=".8" width="7" height="7" fill="#fff" stroke="#000" stroke-width="1.400"/></svg><div class="a" style="left:23px;top:544px;width:57.500px;height:19.500px;border:1px solid #5e5e5e;border-radius:2px"></div><div class="a" style="left:23px;top:544px;width:18.500px;height:19.500px;background:#383838;border-radius:2px 0 0 2px"></div><div class="a" style="left:41.500px;top:544px;width:1px;height:19.500px;background:#5e5e5e"></div><div class="a" style="left:61px;top:544px;width:1px;height:19.500px;background:#5e5e5e"></div><svg style="left:25px;top:547px" width="54" height="13" viewBox="0 0 54 13"><defs><linearGradient id="mg" x1="0" x2="1"><stop offset="0" stop-color="#fff"/><stop offset="1" stop-color="#333"/></linearGradient></defs><rect x=".75" y=".75" width="11.500" height="11.500" fill="#bcbcbc" stroke="#0c0c0c" stroke-width="1.500"/><rect x="20.450" y=".75" width="11.500" height="11.500" fill="url(#mg)" stroke="#0c0c0c" stroke-width="1.500"/><rect x="40.650" y=".75" width="11.500" height="11.500" fill="#fff" stroke="#0c0c0c" stroke-width="1.500"/><path d="M41.600 11.600L51.400 1.500" stroke="#e01414" stroke-width="2.400"/></svg><div class="a" style="left:23px;top:569px;width:57.500px;height:18px;border:1px solid #5e5e5e;border-radius:2px"></div><div class="a" style="left:23px;top:569px;width:18.500px;height:18px;background:#383838;border-radius:2px 0 0 2px"></div><div class="a" style="left:41.500px;top:569px;width:1px;height:18px;background:#5e5e5e"></div><div class="a" style="left:61px;top:569px;width:1px;height:18px;background:#5e5e5e"></div><svg style="left:25px;top:571px" width="54" height="14" viewBox="0 0 54 14"><circle cx="6" cy="5.500" r="3.800" fill="#777" stroke="#c9c9c9" stroke-width="1"/><rect x="6.500" y="6.500" width="6" height="6" fill="#c9c9c9"/><rect x="26.500" y="6.500" width="6" height="6" fill="#b0b0b0"/><circle cx="26" cy="5.500" r="3.800" fill="#777" stroke="#b0b0b0" stroke-width="1"/><circle cx="46.500" cy="6.500" r="3.800" fill="none" stroke="#666" stroke-width="1"/><path d="M46.500 6.500h3.800a3.800 3.800 0 0 1-3.800 3.800z" fill="#666"/></svg><svg style="left:41px;top:595px" width="23" height="16" viewBox="0 0 23 16"><rect x=".5" y="6.500" width="13" height="9" fill="#6e6e6e" stroke="#c9c9c9" stroke-width="1"/><rect x="8.500" y=".5" width="13.500" height="10" fill="#6e6e6e" stroke="#c9c9c9" stroke-width="1"/><path d="M8.500 1.500h13.500" stroke="#c9c9c9" stroke-width="2"/></svg><svg style="left:44.500px;top:633.500px" width="15" height="4" viewBox="0 0 15 4"><circle cx="1.800" cy="2" r="1.700" fill="#c9c9c9"/><circle cx="7.400" cy="2" r="1.700" fill="#c9c9c9"/><circle cx="13" cy="2" r="1.700" fill="#c9c9c9"/></svg><svg style="left:0;top:0" width="0" height="0"><defs><linearGradient id="dg" x1="0" x2="1"><stop offset="0" stop-color="#2e2e2e"/><stop offset="1" stop-color="#f4f4f4"/></linearGradient></defs></svg>
<div class="grip" style="left:142px;top:123.5px"></div>
<div class="a" style="left:90px;top:216.5px;width:123px;height:1.500px;background:#393939"></div>
<svg style="left:100.500px;top:135.5px" width="18" height="18" viewBox="0 0 18 18"><path d="M2.200 15L7.700 2.800 13.200 15M4.300 10.800h6.800" fill="none" stroke="#c9c9c9" stroke-width="1.700"/><path d="M16 0v17.600" stroke="#c9c9c9" stroke-width="1.100"/></svg>
<span class="t lbl" style="left:127px;top:137.5px">Character</span>
<svg style="left:100.500px;top:163.5px" width="18" height="18" viewBox="0 0 18 18"><path d="M7.800 1.800h6v1.300h-1.500v13.400H11V3.100H9.700v13.400H8.300V9.400C4.800 9.400 2.500 8 2.500 5.500c0-2.300 2.200-3.700 5.300-3.700z" fill="#c9c9c9"/></svg>
<span class="t lbl" style="left:127px;top:165.5px">Paragraph</span>
<svg style="left:100.500px;top:191.5px" width="18" height="18" viewBox="0 0 18 18"><path d="M9.900 .800c3.900 0 5.600 3.500 4.600 8-1 4.400-4 7.500-7.300 7.500-3.800 0-5.500-3.500-4.500-8 1-4.300 3.900-7.500 7.200-7.500zM9.800 1.900c-1.800 0-3.400 2.800-4.200 6.500-.9 3.800-.5 6.800 1.400 6.800 1.800 0 3.500-2.800 4.300-6.500.9-3.900.4-6.800-1.500-6.800z" fill="#c9c9c9"/></svg>
<span class="t lbl" style="left:127px;top:193.5px">OpenType</span>
<div class="grip" style="left:142px;top:220.5px"></div>
<div class="a" style="left:90px;top:313.5px;width:123px;height:1.500px;background:#393939"></div>
<svg style="left:100.500px;top:232.5px" width="18" height="18" viewBox="0 0 18 18"><circle cx="9" cy="9" r="5.700" fill="#c9c9c9"/><circle cx="9" cy="9" r="8" fill="none" stroke="#c9c9c9" stroke-width="1" stroke-dasharray="1.500 1.300"/></svg>
<span class="t lbl" style="left:127px;top:234.5px">Appearance</span>
<svg style="left:100.500px;top:260.5px" width="18" height="18" viewBox="0 0 18 18"><path d="M5.500 1.200l5 2v6l-5 2.400-5-2.400v-6zM.5 3.200l5 2.300 5-2.300M5.500 5.500v6" fill="none" stroke="#c9c9c9" stroke-width="1"/><path d="M13.500 2h4v3.500h-4zM13.500 7.500h4V11h-4zM.5 14.500h17v3.300H.5z" fill="#c9c9c9"/><path d="M13.300 15.300h3l-1.500 1.800z" fill="#535353"/></svg>
<span class="t lbl" style="left:127px;top:262.5px">Properties</span>
<svg style="left:100.500px;top:288.5px" width="18" height="18" viewBox="0 0 18 18"><circle cx="6.300" cy="6.800" r="5.800" fill="#c9c9c9"/><circle cx="11" cy="11.500" r="5.800" fill="#8f8f8f" stroke="#c9c9c9" stroke-width="1"/><path d="M5.400 10.700A5.800 5.800 0 0 1 11.800 5.800 5.800 5.800 0 0 1 5.400 10.700z" fill="#a8a8a8"/></svg>
<span class="t lbl" style="left:127px;top:290.5px">Transparency</span>
<div class="grip" style="left:142px;top:317.5px"></div>
<div class="a" style="left:90px;top:382.5px;width:123px;height:1.500px;background:#393939"></div>
<svg style="left:100.500px;top:329.5px" width="18" height="18" viewBox="0 0 18 18"><path d="M4.500 11.500h9.500V18H4.500z" fill="#c9c9c9"/><path d="M5.500 11L3.200 5.800C2.200 5 1.700 3.300 2.500 1.800c1.200.5 2.300 1.800 2 3.600L7 11zM8.500 11V4.700C7.500 3.300 8 1.200 9.300 0c1.200 1.300 1.500 3.300.7 4.700V11zM11 11l2.200-4.600c-1.200-1.800.5-3.500 3.800-2.700.7.200.7 1.600 0 2.500-.7.800-1.700.8-2.600.6L12.500 11z" fill="#c9c9c9"/></svg>
<span class="t lbl" style="left:127px;top:331.5px">Brushes</span>
<svg style="left:100.500px;top:357.5px" width="18" height="18" viewBox="0 0 18 18"><path d="M.5 3.300h17" stroke="#c9c9c9" stroke-width="1"/><path d="M.5 8.300h17" stroke="#c9c9c9" stroke-width="2"/><path d="M.5 14.200h17" stroke="#c9c9c9" stroke-width="3.200"/></svg>
<span class="t lbl" style="left:127px;top:359.5px">Stroke</span>
<div class="grip" style="left:142px;top:386.5px"></div>
<div class="a" style="left:90px;top:479.5px;width:123px;height:1.500px;background:#393939"></div>
<svg style="left:100.500px;top:398.5px" width="18" height="18" viewBox="0 0 18 18"><rect x="2.500" y="2.500" width="13" height="13" fill="none" stroke="#c9c9c9" stroke-width="1.100" stroke-dasharray="2.200 1.300"/><path d="M1 1h3v3H1zM14 1h3v3h-3zM1 14h3v3H1zM14 14h3v3h-3z" fill="#c9c9c9"/><path d="M7.500 9h3M9 7.500v3" stroke="#c9c9c9" stroke-width="1"/></svg>
<span class="t lbl" style="left:127px;top:400.5px">Transform</span>
<svg style="left:100.500px;top:426.5px" width="18" height="18" viewBox="0 0 18 18"><path d="M1.500 0v18" stroke="#c9c9c9" stroke-width="1.100"/><path d="M3.500 2.500h8.500v5.500H3.500zM3.500 10h14v5.500h-14z" fill="#c9c9c9"/></svg>
<span class="t lbl" style="left:127px;top:428.5px">Align</span>
<svg style="left:100.500px;top:454.5px" width="18" height="18" viewBox="0 0 18 18"><path d="M1 1.500h9v9H1z" fill="#c9c9c9"/><path d="M4.500 5h9v9h-9z" fill="#535353"/><path d="M4.800 5.300h8.400v8.400H4.800z" fill="#c9c9c9" opacity=".55"/><path d="M8 8.500h9.500V18H8z" fill="#c9c9c9" stroke="#535353" stroke-width="1"/></svg>
<span class="t lbl" style="left:127px;top:456.5px">Pathfinder</span>
<div class="grip" style="left:142px;top:483.5px"></div>
<div class="a" style="left:90px;top:520.5px;width:123px;height:1.500px;background:#393939"></div>
<svg style="left:100.500px;top:495.5px" width="18" height="18" viewBox="0 0 18 18"><circle cx="8.500" cy="9.500" r="6.200" fill="#c9c9c9"/><path d="M12.500 3.600A8 8 0 0 1 12.500 15.400" fill="none" stroke="#c9c9c9" stroke-width="1"/><circle cx="8.500" cy="1.700" r="1.400" fill="#535353" stroke="#c9c9c9" stroke-width=".9"/><circle cx="8.500" cy="17" r="1.400" fill="#535353" stroke="#c9c9c9" stroke-width=".9"/><path d="M15.800 7.800l2.200 1.700-2.200 1.700z" fill="#c9c9c9"/></svg>
<span class="t lbl" style="left:127px;top:497.5px">Image Trace</span>
<div class="grip" style="left:142px;top:524.5px"></div>
<div class="a" style="left:90px;top:617.5px;width:123px;height:1.500px;background:#393939"></div>
<svg style="left:100.500px;top:536.5px" width="18" height="18" viewBox="0 0 18 18"><path d="M9.500 2.800c5 0 9.500 2 9.500 5.400 0 2-1.700 2.600-3.300 2.200-1.700-.5-2.800.4-2.300 1.700.5 1.400-.8 2.500-3.900 2.500C4.500 14.600 0 12.300 0 8.500 0 5 4.500 2.800 9.500 2.800z" fill="#c9c9c9"/><circle cx="3.700" cy="8.700" r="1.300" fill="#535353"/><circle cx="6.300" cy="11.800" r="1.300" fill="#535353"/><circle cx="10.400" cy="12" r="1.300" fill="#535353"/><circle cx="7.300" cy="5.700" r="1.300" fill="#535353"/><ellipse cx="14.200" cy="6.500" rx="2.200" ry="1.500" fill="#535353"/></svg>
<span class="t lbl" style="left:127px;top:538.5px">Color</span>
<svg style="left:100.500px;top:564.5px" width="18" height="18" viewBox="0 0 18 18"><path d="M.5 4h17.500v10.500H.5z" fill="none" stroke="#c9c9c9" stroke-width="1"/><path d="M2 5.500h4.200v3.300H2zM7.200 5.500h4.200v3.300H7.200zM12.400 5.500h4.200v3.300h-4.200z" fill="#c9c9c9"/><path d="M2 9.800h4.200v3.300H2zM7.200 9.800h4.200v3.300H7.200zM12.400 9.800h4.200v3.300h-4.200z" fill="#9a9a9a"/></svg>
<span class="t lbl" style="left:127px;top:566.5px">Swatches</span>
<svg style="left:100.500px;top:592.5px" width="18" height="18" viewBox="0 0 18 18"><rect x=".5" y="3.500" width="17.500" height="11.500" fill="url(#dg)" stroke="#c9c9c9" stroke-width="1"/></svg>
<span class="t lbl" style="left:127px;top:594.5px">Gradient</span>
<div class="grip" style="left:142px;top:621.5px"></div>
<div class="a" style="left:90px;top:658.5px;width:123px;height:1.500px;background:#393939"></div>
<svg style="left:100.500px;top:633.5px" width="18" height="18" viewBox="0 0 18 18"><path d="M2.500 1.500h12v13h-12z" fill="#777" stroke="#c9c9c9" stroke-width="1"/><path d="M2.500 1.500l6 6.500 6-6.500zM2.500 14.500l6-6.500 6 6.500z" fill="#c9c9c9" opacity=".55"/><path d="M2.500 1.500l12 13M14.500 1.500l-12 13" stroke="#c9c9c9" stroke-width=".8"/><path d="M2.500 18.500l6-4 6 4z" fill="#c9c9c9"/></svg>
<span class="t lbl" style="left:127px;top:635.5px">Separations ...</span><div class="a" style="left:216px;top:138px;width:1414px;height:874px;background:#606060;overflow:hidden"><div class="a" style="left:-216px;top:-138px"><div class="a" style="left:494px;top:332px;width:428px;height:427.5px;border:1px solid;border-color:#6e6e6e #6e6e6e #4c4c4c #4c4c4c;background:radial-gradient(circle 302px at 50% 50%,#fff 0,#fff 40%,#f6f6f6 45%,#eaeaea 51%,#dddcdc 56%,#d4d3d2 61%,#cdcccb 66%,#c5c4c3 71%,#bab9b8 77%,#b2b1b0 83%,#acaba9 90%,#a8a8a5 95%,#a7a7a4 100%)"></div><div class="a" style="left:929px;top:333px;width:426px;height:426px;border:1px solid;border-color:#000;background:radial-gradient(circle 302px at 50% 50%,#fff 0,#fff 40%,#f6f6f6 45%,#eaeaea 51%,#dddcdc 56%,#d4d3d2 61%,#cdcccb 66%,#c5c4c3 71%,#bab9b8 77%,#b2b1b0 83%,#acaba9 90%,#a8a8a5 95%,#a7a7a4 100%)"></div><div class="a" style="left:1362px;top:332.500px;width:300px;height:426.500px;border:1px solid #4c4c4c;background:#fff"></div><svg style="left:0;top:0" width="1630" height="1012" viewBox="0 0 1630 1012"><defs><linearGradient id="sh" x1="0" x2="1"><stop offset="0" stop-color="#0c0c0c"/><stop offset=".25" stop-color="#141514"/><stop offset=".5" stop-color="#181918"/><stop offset=".75" stop-color="#131413"/><stop offset="1" stop-color="#0b0b0b"/></linearGradient></defs><g><path d="M740.5 400.2 C750.8 406 771.8 414 792.8 421.5 C800.8 425.5 806.3 431 808.8 441 C814.8 461 819.8 482 822.5 503.5 C808.3 508.5 792.8 511.5 778.3 512.2 C774.8 534 772.3 556 773 577 C775.3 612 782.8 646 785.6 679 C785.8 682 784.8 683.8 780.8 685 C756.8 690.5 731.8 692 708.4 692 C685 692 660 690.5 636 685 C632 683.8 631 682 631.2 679 C634 646 641.5 612 643.8 577 C644.5 556 642 534 638.5 512.2 C624 511.5 608.5 508.5 594.3 503.5 C597 482 602 461 608 441 C610.5 431 616 425.5 624 421.5 C645 414 666 406 676.3 400.2 C686.500 404.500 697.500 406.700 708.4 406.700 C719.3 406.700 730.3 404.500 740.5 400.2 Z" fill="url(#sh)"/><path d="M676 400.200C686 404.500 697 406.700 709.200 406.700C721.500 406.700 732.500 404.500 742.300 400.200C738 409.500 724 413 709.200 413C694 413 680 409.500 676 400.200Z" fill="#101010"/><path d="M677.500 402C683 417 695 421.500 708.400 421.500C722 421.500 734 417 739.300 402" fill="none" stroke="#0a0a0a" stroke-width="1" opacity=".35"/><path d="M675.500 402.500C680 423 694 428.500 708.400 428.500C723 428.500 737 423 741.300 402.500" fill="none" stroke="#0a0a0a" stroke-width="1.200" opacity=".4"/><path d="M633 676.500C659 683 685 685.500 710 685.500C735 685.500 760 683 784.500 676.500" fill="none" stroke="#242524" stroke-width=".8"/><path d="M638.500 512.200C636 490 634 470 637 452M778.500 512.200C781 490 783 470 780 452" fill="none" stroke="#0a0a0a" stroke-width="1.500" opacity=".8"/></g><g transform="translate(433.500 0)"><path d="M740.5 400.2 C750.8 406 771.8 414 792.8 421.5 C800.8 425.5 806.3 431 808.8 441 C814.8 461 819.8 482 822.5 503.5 C808.3 508.5 792.8 511.5 778.3 512.2 C774.8 534 772.3 556 773 577 C775.3 612 782.8 646 785.6 679 C785.8 682 784.8 683.8 780.8 685 C756.8 690.5 731.8 692 708.4 692 C685 692 660 690.5 636 685 C632 683.8 631 682 631.2 679 C634 646 641.5 612 643.8 577 C644.5 556 642 534 638.5 512.2 C624 511.5 608.5 508.5 594.3 503.5 C597 482 602 461 608 441 C610.5 431 616 425.5 624 421.5 C645 414 666 406 676.3 400.2 C686.500 404.500 697.500 406.700 708.4 406.700 C719.3 406.700 730.3 404.500 740.5 400.2 Z" fill="url(#sh)"/><path d="M676 400.200C686 404.500 697 406.700 709.200 406.700C721.500 406.700 732.500 404.500 742.300 400.200C738 409.500 724 413 709.200 413C694 413 680 409.500 676 400.200Z" fill="#101010"/><path d="M677.500 402C683 417 695 421.500 708.400 421.500C722 421.500 734 417 739.300 402" fill="none" stroke="#0a0a0a" stroke-width="1" opacity=".35"/><path d="M675.500 402.500C680 423 694 428.500 708.400 428.500C723 428.500 737 423 741.300 402.500" fill="none" stroke="#0a0a0a" stroke-width="1.200" opacity=".4"/><path d="M633 676.500C659 683 685 685.500 710 685.500C735 685.500 760 683 784.500 676.500" fill="none" stroke="#242524" stroke-width=".8"/><path d="M638.500 512.200C636 490 634 470 637 452M778.500 512.200C781 490 783 470 780 452" fill="none" stroke="#0a0a0a" stroke-width="1.500" opacity=".8"/></g></svg></div></div><div class="a" style="left:1630px;top:138px;width:16px;height:890px;background:#4b4b4b"></div><svg style="left:1634.500px;top:144px" width="8" height="5" viewBox="0 0 8 5"><path d="M.5 4.500L4 1l3.500 3.500" fill="none" stroke="#b4b4b4" stroke-width="1.100"/></svg><svg style="left:1634.500px;top:1001px" width="8" height="5" viewBox="0 0 8 5"><path d="M.5.500L4 4l3.500-3.500" fill="none" stroke="#b4b4b4" stroke-width="1.100"/></svg><div class="a" style="left:1631px;top:565.500px;width:14.500px;height:25.500px;border-radius:7.200px;background:#606060"></div><div class="a" style="left:216px;top:1012px;width:1414px;height:16px;background:#4e4e4e"></div><div class="a" style="left:216px;top:1012px;width:440px;height:1px;background:#484848"></div><div class="a" style="left:647px;top:1012px;width:983px;height:16px;background:#4a4a4a"></div><div class="a" style="left:220px;top:1013px;width:50px;height:15px;background:#454545;border-left:1px solid #5e5e5e;border-top:1px solid #5e5e5e"></div><div class="a" style="left:270px;top:1013px;width:18px;height:15px;background:#4a4a4a;border-left:1px solid #5e5e5e;border-top:1px solid #5e5e5e"></div><span class="t" style="left:223px;top:1014.500px;color:#f0f0f0;letter-spacing:-.4px">25%</span><svg style="left:274.5px;top:1019.5px" width="8" height="5" viewBox="0 0 8 5"><path d="M.5.500L4 4l3.500-3.500" fill="none" stroke="#e0e0e0" stroke-width="1.200"/></svg><svg style="left:297px;top:1016px" width="8" height="9" viewBox="0 0 8 9"><path d="M0 0h1.600v9H0zM8 0v9L2.200 4.500z" fill="#e0e0e0"/></svg><svg style="left:314.5px;top:1016px" width="8" height="9" viewBox="0 0 8 9"><path d="M6 0v9L0 4.500z" fill="#e0e0e0"/></svg><div class="a" style="left:329.5px;top:1013px;width:41px;height:15px;background:#454545;border-left:1px solid #5e5e5e;border-top:1px solid #5e5e5e"></div><div class="a" style="left:370.5px;top:1013px;width:17.5px;height:15px;background:#4a4a4a;border-left:1px solid #5e5e5e;border-top:1px solid #5e5e5e"></div><span class="t" style="left:333px;top:1014.500px;color:#f0f0f0">2</span><svg style="left:374.5px;top:1019.5px" width="8" height="5" viewBox="0 0 8 5"><path d="M.5.500L4 4l3.500-3.500" fill="none" stroke="#e0e0e0" stroke-width="1.200"/></svg><svg style="left:397.5px;top:1016px" width="8" height="9" viewBox="0 0 8 9"><path d="M0 0v9l6-4.500z" fill="#e0e0e0"/></svg><svg style="left:413px;top:1016px" width="8" height="9" viewBox="0 0 8 9"><path d="M6.400 0H8v9H6.400zM0 0v9l5.800-4.500z" fill="#e0e0e0"/></svg><div class="a" style="left:430px;top:1013px;width:199px;height:15px;background:#505050;border-left:1px solid #5e5e5e;border-top:1px solid #5e5e5e"></div><span class="t" style="left:474px;top:1014.500px;color:#e4e4e4;letter-spacing:-.05px">Toggle Direct Selection</span><svg style="left:636px;top:1016px" width="6" height="9" viewBox="0 0 6 9"><path d="M0 0v9l5.500-4.500z" fill="#e0e0e0"/></svg><svg style="left:653px;top:1016.500px" width="5" height="8" viewBox="0 0 5 8"><path d="M4.300.700L1 4l3.300 3.300" fill="none" stroke="#a0a0a0" stroke-width="1.100"/></svg><svg style="left:1619px;top:1016.500px" width="5" height="8" viewBox="0 0 5 8"><path d="M.7.700L4 4 .7 7.300" fill="none" stroke="#b4b4b4" stroke-width="1.100"/></svg><div class="a" style="left:878px;top:1013px;width:25px;height:14.500px;border-radius:7.200px;background:#5e5e5e"></div><div class="a dk" style="left:1649px;top:121px;width:240px;height:26px"></div><div class="a" style="left:1649px;top:146.500px;width:240px;height:1.500px;background:#3c3c3c"></div><div class="a" style="left:1700px;top:121px;width:1px;height:26px;background:#383838"></div><div class="a" style="left:1770px;top:121px;width:1px;height:26px;background:#383838"></div><div class="a" style="left:1771px;top:121px;width:45px;height:27px;background:#535353"></div><span class="t" style="left:1658px;top:125.500px;font-weight:bold;color:#c4c4c4;letter-spacing:-.25px">Layers</span><span class="t" style="left:1710px;top:125.500px;font-weight:bold;color:#c4c4c4;letter-spacing:-.25px">Artboards</span><span class="t" style="left:1780px;top:125.500px;font-weight:bold;color:#f4f4f4;letter-spacing:-.15px">Links</span><svg style="left:1873px;top:131px" width="10" height="8" viewBox="0 0 10 8"><path d="M0 .700h10M0 4h10M0 7.300h10" stroke="#c4c4c4" stroke-width="1.100"/></svg><div class="a" style="left:1654.500px;top:154px;width:229.500px;height:854.500px;border:1px solid #626262;border-radius:2px"></div><div class="a" style="left:1649px;top:120px;width:240px;height:1px;background:#393939"></div><svg style="left:1664.500px;top:1012.500px" width="6" height="12" viewBox="0 0 6 12"><path d="M0 0v12l6-6z" fill="#dcdcdc"/></svg><svg style="left:1737px;top:1011px" width="19" height="14" viewBox="0 0 19 14"><path d="M6.500 4.500V1.500h8M14.500 1.500V11H10" fill="none" stroke="#727272" stroke-width="1"/><path d="M9.500 6V3.500h8.500v9.500H11" fill="none" stroke="#727272" stroke-width="1"/><path d="M14 3.500v3l1.200-1 1.200 1v-3z" fill="#727272"/><rect x=".6" y="9" width="5.500" height="3.600" rx="1.800" fill="none" stroke="#727272" stroke-width="1.100"/><rect x="4.400" y="9" width="5.500" height="3.600" rx="1.800" fill="none" stroke="#727272" stroke-width="1.100"/></svg><svg style="left:1765.500px;top:1014px" width="15" height="8" viewBox="0 0 15 8"><rect x=".7" y="1.500" width="8" height="5" rx="2.500" fill="none" stroke="#727272" stroke-width="1.300"/><rect x="6.300" y="1.500" width="8" height="5" rx="2.500" fill="none" stroke="#727272" stroke-width="1.300"/></svg><svg style="left:1791px;top:1012px" width="16" height="13" viewBox="0 0 16 13"><path d="M6.500 3.500V.500h5.500l3 3v8.500H6.500V9.500" fill="none" stroke="#727272" stroke-width="1"/><path d="M12 .500v3h3" fill="none" stroke="#727272" stroke-width="1"/><path d="M0 6.500h6" stroke="#727272" stroke-width="1.500"/><path d="M5.500 3.800l3.500 2.700-3.500 2.700z" fill="#727272"/></svg><svg style="left:1818.500px;top:1012.500px" width="12" height="12" viewBox="0 0 12 12"><path d="M1.500 5A4.600 4.600 0 0 1 10 3.500M10.500 7A4.600 4.600 0 0 1 2 8.500" fill="none" stroke="#727272" stroke-width="1.300"/><path d="M11.500.500v4h-4zM.5 11.500v-4h4z" fill="#727272"/></svg><svg style="left:1845px;top:1012.500px" width="12" height="12" viewBox="0 0 12 12"><path d="M.5 11.500l.8-3.200 7.500-7.500 2.400 2.400-7.500 7.500z" fill="#727272"/></svg></div></div>
</body>
</html>
